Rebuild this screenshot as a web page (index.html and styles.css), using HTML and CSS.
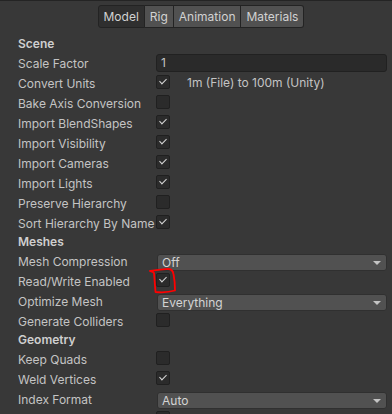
FILE: index.html
```html
<!DOCTYPE html>
<html lang="en">
<head>
    <meta charset="UTF-8">
    <title>Model Import Settings</title>
    <link rel="stylesheet" href="styles.css">
</head>
<body>
<div class="inspector">
    <div class="tabs">
        <span class="tab active">Model</span><span class="tab">Rig</span><span class="tab">Animation</span><span class="tab">Materials</span>
    </div>

    <div class="section-title">Scene</div>
    <div class="row">
        <span class="label">Scale Factor</span>
        <span class="text-field">1</span>
    </div>
    <div class="row">
        <span class="label">Convert Units</span>
        <span class="checkbox checked"></span>
        <span class="hint">1m (File) to 100m (Unity)</span>
    </div>
    <div class="row">
        <span class="label">Bake Axis Conversion</span>
        <span class="checkbox"></span>
    </div>
    <div class="row">
        <span class="label">Import BlendShapes</span>
        <span class="checkbox checked"></span>
    </div>
    <div class="row">
        <span class="label">Import Visibility</span>
        <span class="checkbox checked"></span>
    </div>
    <div class="row">
        <span class="label">Import Cameras</span>
        <span class="checkbox checked"></span>
    </div>
    <div class="row">
        <span class="label">Import Lights</span>
        <span class="checkbox checked"></span>
    </div>
    <div class="row">
        <span class="label">Preserve Hierarchy</span>
        <span class="checkbox"></span>
    </div>
    <div class="row">
        <span class="label">Sort Hierarchy By Name</span>
        <span class="checkbox checked"></span>
    </div>

    <div class="section-title">Meshes</div>
    <div class="row">
        <span class="label">Mesh Compression</span>
        <span class="dropdown">Off</span>
    </div>
    <div class="row">
        <span class="label">Read/Write Enabled</span>
        <span class="checkbox checked"></span>
        <!-- red circle someone drew on the screenshot -->
        <svg class="scribble" width="32" height="30" viewBox="0 0 32 30">
            <path d="M3 6 C8 5 15 4.5 21 4 C25 4 26 6 26.5 9 C27.5 14 28 20 28 25.5 C23 27 14 27.5 8.5 27 C8 21 7.5 14 7 8 C6 6.5 4.5 6.5 3 6"
                  fill="none" stroke="#ff0000" stroke-width="1.8" stroke-linecap="round" stroke-linejoin="round"/>
        </svg>
    </div>
    <div class="row">
        <span class="label">Optimize Mesh</span>
        <span class="dropdown">Everything</span>
    </div>
    <div class="row">
        <span class="label">Generate Colliders</span>
        <span class="checkbox"></span>
    </div>

    <div class="section-title">Geometry</div>
    <div class="row">
        <span class="label">Keep Quads</span>
        <span class="checkbox"></span>
    </div>
    <div class="row">
        <span class="label">Weld Vertices</span>
        <span class="checkbox checked"></span>
    </div>
    <div class="row">
        <span class="label">Index Format</span>
        <span class="dropdown">Auto</span>
    </div>
    <div class="row">
        <span class="label"></span>
        <span class="checkbox"></span>
    </div>
</div>
</body>
</html>
```
FILE: styles.css
```css
body {
    margin: 0;
    background-color: #383838;
    font-family: Inter, 'Noto Sans', sans-serif;
    font-size: 12px;
    color: #c4c4c4;
    overflow: hidden;
}

.inspector {
    border-top: 1px solid #242424;
    padding: 4px 5px 0 18px;
}

.tabs {
    display: flex;
    justify-content: center;
    margin-left: -3px;
    margin-bottom: 7px;
}

.tab {
    height: 21px;
    line-height: 21px;
    padding: 0 5px;
    background-color: #515151;
    border: 1px solid #232323;
    border-left: none;
    color: #d2d2d2;
    font-size: 12px;
}

.tab:first-child {
    border-left: 1px solid #232323;
    border-radius: 3px 0 0 3px;
}

.tab:last-child {
    border-radius: 0 3px 3px 0;
}

.tab.active {
    background-color: #2f2f2f;
}

.section-title {
    height: 18px;
    line-height: 18px;
    font-weight: 600;
    color: #cfcfcf;
}

.row {
    position: relative;
    display: flex;
    align-items: center;
    height: 20px;
}

.label {
    width: 138px;
    flex-shrink: 0;
    white-space: nowrap;
    overflow: hidden;
}

.text-field {
    flex: 1;
    height: 16px;
    line-height: 16px;
    margin-bottom: 1px;
    padding-left: 4px;
    background-color: #2a2a2a;
    border: 1px solid #212121;
    border-radius: 3px;
}

.checkbox {
    width: 12px;
    height: 12px;
    margin-bottom: 3px;
    background-color: #2b2b2b;
    border: 1px solid #202020;
    border-radius: 2px;
    position: relative;
}

.checkbox.checked::after {
    content: "";
    position: absolute;
    left: 3.5px;
    top: 1px;
    width: 3px;
    height: 6px;
    border-right: 1.6px solid #d8d8d8;
    border-bottom: 1.6px solid #d8d8d8;
    transform: rotate(45deg);
}

.hint {
    margin-left: 17px;
    margin-bottom: 2px;
}

.dropdown {
    flex: 1;
    height: 15px;
    line-height: 15px;
    margin-left: 1px;
    margin-top: 2px;
    padding-left: 4px;
    background-color: #515151;
    border: 1px solid #303030;
    border-radius: 3px;
    position: relative;
    color: #d4d4d4;
}

.dropdown::after {
    content: "";
    position: absolute;
    right: 5px;
    top: 6px;
    border-left: 4px solid transparent;
    border-right: 4px solid transparent;
    border-top: 4px solid #c4c4c4;
}

.scribble {
    position: absolute;
    left: 129px;
    top: -6px;
}
```
